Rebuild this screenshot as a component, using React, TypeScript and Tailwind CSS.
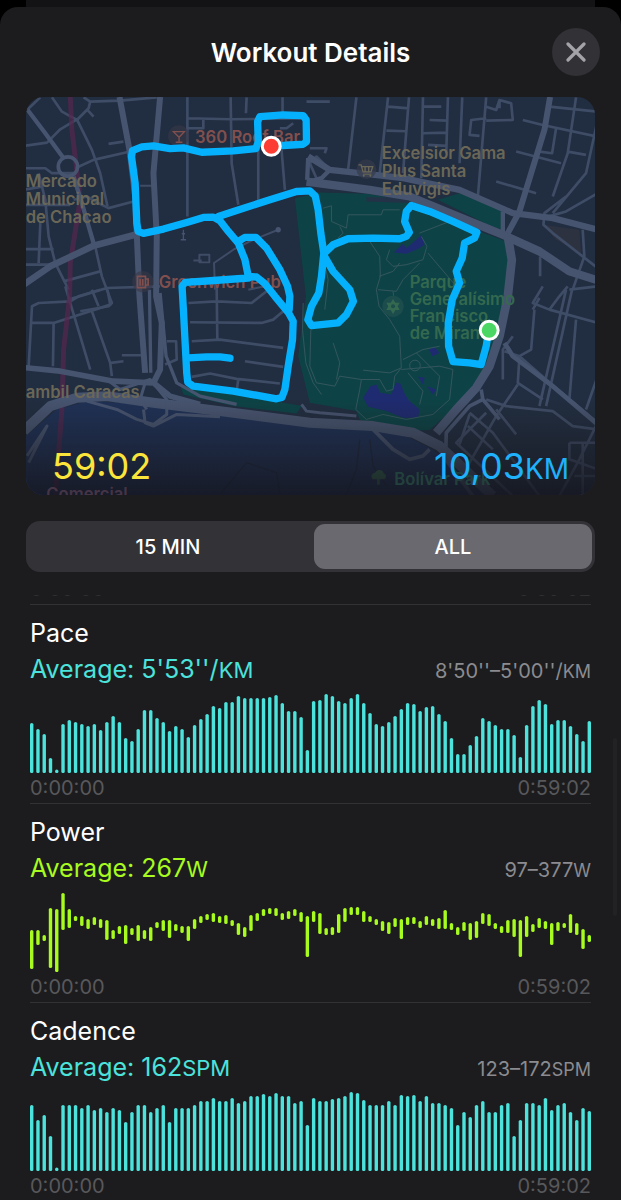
import { useState } from 'react';

type Range = [number, number];

interface Metric {
  name: string;
  average: string;
  range: string;
  unit: string;
  color: string;
  stroke: string;
  bars: Range[];
}

const fromZero = (values: number[]): Range[] => values.map((v) => [0, v]);

const PACE = fromZero([
  50, 44, 39, 15, 3, 49, 53, 51, 49, 47, 49, 43, 51, 57, 51, 35, 32, 44, 63, 63, 55, 51, 42, 47, 44, 36, 48, 54, 59, 67,
  65, 71, 71, 77, 75, 75, 75, 75, 76, 78, 70, 62, 62, 56, 23, 72, 73, 79, 77, 72, 70, 75, 79, 70, 60, 49, 47, 51, 57, 64,
  70, 69, 62, 66, 67, 59, 52, 35, 19, 19, 28, 37, 55, 52, 48, 44, 44, 38, 16, 48, 67, 73, 69, 49, 53, 53, 47, 39, 32, 52,
]);

const POWER: Range[] = [
  [3, 42], [27, 42], [31, 37], [4, 64], [0, 63], [42, 79], [44, 63], [51, 56], [46, 56], [43, 53],
  [47, 55], [44, 53], [32, 52], [33, 42], [38, 46], [28, 47], [37, 44], [31, 47], [33, 42], [31, 45],
  [44, 50], [41, 52], [34, 52], [41, 48], [39, 46], [31, 46], [43, 53], [49, 56], [52, 58], [50, 59],
  [49, 56], [48, 57], [46, 52], [37, 49], [35, 45], [41, 57], [51, 59], [56, 63], [58, 64], [56, 64],
  [52, 59], [53, 61], [56, 63], [50, 60], [15, 56], [50, 61], [38, 59], [37, 44], [37, 45], [39, 58],
  [50, 64], [57, 65], [57, 65], [50, 61], [50, 56], [47, 53], [41, 51], [38, 50], [45, 54], [33, 53],
  [47, 55], [48, 55], [44, 51], [47, 56], [46, 53], [43, 54], [43, 62], [42, 49], [37, 45], [41, 50],
  [32, 49], [34, 51], [48, 59], [46, 58], [43, 49], [39, 46], [39, 52], [35, 53], [15, 52], [35, 56],
  [40, 48], [44, 54], [43, 51], [27, 49], [41, 50], [44, 49], [39, 58], [37, 49], [23, 43], [30, 37],
];

const CADENCE = fromZero([
  66, 51, 56, 35, 3, 66, 66, 66, 63, 66, 61, 63, 59, 63, 61, 49, 59, 66, 66, 59, 63, 66, 49, 63, 63, 63, 66, 70, 70, 73,
  70, 70, 73, 68, 70, 75, 75, 77, 75, 78, 75, 75, 68, 70, 46, 73, 70, 70, 72, 73, 75, 79, 78, 71, 66, 66, 66, 70, 66, 76,
  75, 76, 70, 75, 68, 68, 66, 63, 46, 59, 54, 66, 70, 59, 59, 66, 68, 35, 51, 68, 68, 66, 73, 61, 66, 68, 59, 51, 63, 60,
]);

const METRICS: Metric[] = [
  { name: 'Pace', average: "5'53''/", range: "8'50''–5'00''/", unit: 'KM', color: 'text-[#4be3dc]', stroke: '#4be3dc', bars: PACE },
  { name: 'Power', average: '267', range: '97–377', unit: 'W', color: 'text-[#a7fb1f]', stroke: '#a7fb1f', bars: POWER },
  { name: 'Cadence', average: '162', range: '123–172', unit: 'SPM', color: 'text-[#4be3dc]', stroke: '#4be3dc', bars: CADENCE },
];

// Bars are spread over 561 units, 80 units tall
function BarChart({ bars, stroke, label }: { bars: Range[]; stroke: string; label: string }) {
  const step = 557.6 / (bars.length - 1);
  return (
    <svg viewBox="0 0 561 80" className="mt-2 block w-full" role="img" aria-label={label}>
      {bars.map(([low, high], i) => {
        const x = 1.7 + i * step;
        return (
          <line
            key={i}
            x1={x}
            x2={x}
            y1={80 - Math.max(high - 1.6, low + 1.7)}
            y2={80 - low - 1.6}
            stroke={stroke}
            strokeWidth="3.4"
            strokeLinecap="round"
          />
        );
      })}
    </svg>
  );
}

function MetricSection({ metric }: { metric: Metric }) {
  return (
    <section className="border-t border-[#323234] pt-3 pb-1 last:pb-0">
      <h2 className="text-[25px] leading-8 text-white">{metric.name}</h2>
      <div className="mt-1 flex h-8 items-baseline justify-between">
        <p className={`text-[25px] leading-8 ${metric.color}`}>
          Average: {metric.average}
          <span className="text-[22px]">{metric.unit}</span>
        </p>
        <p className="text-[20px] leading-6 text-[#8b8b90]">
          {metric.range}
          <span className="text-[18px]">{metric.unit}</span>
        </p>
      </div>
      <BarChart bars={metric.bars} stroke={metric.stroke} label={`${metric.name} over time`} />
      <div className="mt-1 flex justify-between text-[20px] leading-[22px] text-[#58585b]">
        <span>0:00:00</span>
        <span>0:59:02</span>
      </div>
    </section>
  );
}

function RouteMap() {
  return (
    <svg
      viewBox="17 21 1710 1197"
      preserveAspectRatio="xMidYMid slice"
      className="block w-full"
      role="img"
      aria-label="Route map"
      fontFamily="Inter, sans-serif"
    >
      <defs>
        <linearGradient id="fade" x1="0" y1="0" x2="0" y2="1">
          <stop offset="0" stopColor="#1c1c1e" stopOpacity="0" />
          <stop offset="1" stopColor="#15161f" stopOpacity="0.85" />
        </linearGradient>
      </defs>
      <rect x="10" y="21" width="1725" height="1200" fill="#212d40" />

      {/* Air base south of the highway */}
      <path d="M10 1045 L110 960 L200 935 L400 945 L900 1005 L1120 1020 L1240 1080 L1400 1220 L10 1220 Z" fill="#1f3156" />

      {/* Park */}
      <g fill="#0d4346">
        <path d="M825 325 L900 308 L1040 312 L1180 335 L1380 425 L1462 455 L1480 500 L1470 600 L1450 710 L1415 800 L1370 880 L1300 960 L1230 1022 L1170 1025 L1020 992 L1010 965 L870 940 L835 800 L858 620 Z" />
        <path d="M1255 330 L1320 310 L1448 362 L1448 420 L1400 402 Z" />
        <path d="M480 888 L640 912 L845 950 L830 972 L640 950 L490 915 Z" />
      </g>
      <path d="M1040 322 L1130 322 L1190 340 L1040 335 Z" fill="#243247" />
      <path d="M1570 405 L1680 420 L1685 490 L1610 450 Z" fill="#2d3240" />
      <g fill="#1f2b70">
        <path d="M1030 925 L1052 890 L1070 885 L1082 910 L1115 915 L1128 880 L1142 882 L1156 915 L1170 935 L1200 960 L1195 985 L1150 985 L1100 965 L1045 952 Z" />
        <path d="M1122 488 L1150 462 L1160 475 L1190 450 L1205 435 L1215 465 L1195 478 L1160 492 Z" />
        <path d="M1195 862 L1215 865 L1210 885 Z M1222 890 L1250 900 L1240 915 Z M1228 780 L1245 772 L1260 790 L1238 800 Z" />
      </g>

      {/* Park trails */}
      <g fill="none" stroke="#34565d" strokeWidth="3">
        <path d="M910 355 L935 348 L935 395 L980 415 L985 375 L1085 375 L1090 360 L1140 360" />
        <path d="M1050 455 L1080 500 L1082 560 L1070 600 L1078 650 L1110 690 L1140 740 L1145 835 L1110 850 L1060 845 L1030 842" />
        <path d="M1110 480 L1100 510 L1120 530 L1160 525 L1210 510 L1222 470 L1205 440 M1200 430 L1290 395 M1225 490 L1310 590" />
        <path d="M1078 560 L1120 545 L1140 520 M1075 600 L1130 605 L1150 570 L1200 520 M1130 640 L1110 680 M1120 605 L1125 640" />
        <path d="M875 650 L870 830 L890 880 L945 890 L960 860 L1025 870 L1020 900 L1008 960 L1040 990 L1090 975 L1160 990 L1240 975 L1290 930 L1300 840 L1260 830 L1145 840" />
        <path d="M940 760 L960 820 L950 870 M1025 870 L1080 870 L1100 905 L1120 900 L1125 860 L1145 835" />
        <path d="M1150 810 L1210 780 L1260 770 M1165 850 L1210 905 L1200 945 M1190 790 L1260 860 L1250 920" />
        <circle cx="1186" cy="828" r="16" />
        <path d="M850 640 L848 720 L858 820 L880 880 L905 915 M910 500 L925 570 L915 660 M960 410 L970 430 L955 445" />
      </g>

      {/* Minor streets */}
      <g fill="none" stroke="#3f4c66" strokeWidth="8" strokeLinejoin="round">
        <path d="M20 60 L60 22 M95 22 L125 65 L170 90 L205 55 L210 35 L190 22 M210 35 L300 32 L410 22 M200 58 L220 80" />
        <path d="M10 168 L80 158 L120 118 L170 88 L215 180 L240 250 L262 350" />
        <path d="M165 235 L220 210 L330 185 M10 235 L75 235 L95 250 L165 250 M265 162 L310 155" />
        <path d="M10 345 L150 345 M55 250 L75 330 L85 440 L105 520 L145 600 M10 300 L70 290 M60 400 L55 520 M10 478 L100 478 M10 525 L110 525" />
        <path d="M160 330 L200 320 L235 340 L265 355 L340 335 M225 470 L245 560 L275 640 L265 650 L180 665 M130 575 L240 545 M145 630 L260 595 L420 590" />
        <path d="M25 830 L35 650 L55 640 L150 635 L175 620 L240 600 M100 700 L98 830 M30 700 L100 700 L210 665 L270 645 L262 600" />
        <path d="M135 590 L165 690 L210 840 M215 665 L270 820 L275 860 M215 600 L235 650 M305 797 L370 797 M272 820 L310 815" />
        <path d="M502 22 L502 380 M502 85 L632 88 L860 85 M632 22 L635 220 L655 345 M680 22 L678 70 M715 100 L715 330 M550 90 L550 115 L505 115" />
        <path d="M785 180 L795 300 M788 22 L788 75 M820 100 L800 115 L780 115 M860 35 L930 35" />
        <path d="M360 288 L400 288 M520 512 L545 512 M538 495 L568 495 L568 518 L538 518 Z M585 600 L582 520 L640 480 L700 450 L775 420 M685 600 L735 590" strokeWidth="6" />
        <path d="M505 640 L590 635 L695 640 L740 605 M510 698 L725 700 L760 690 L790 665 M590 590 L592 750 M515 755 L600 750 L790 775 M675 815 L790 832 M515 862 L570 852 L650 868 L780 882 M655 870 L650 905" />
        <path d="M440 755 L468 755 L470 810 L435 825 M1010 22 L985 240 M1105 22 L1080 250 M1105 50 L1168 55 M1100 122 L1160 124 M1168 22 L1150 250" />
        <path d="M1210 22 L1205 265 M1285 22 L1280 190 M1210 50 L1265 50 M1230 90 L1282 92 M1210 130 L1280 128 M1225 165 L1282 168 M1328 22 L1320 220" />
        <path d="M1400 22 L1375 320 M1400 85 L1355 90 L1350 135 L1380 138 M1400 50 L1430 60 L1440 30 L1475 40 L1480 90 L1400 92 M1440 55 L1440 30" />
        <path d="M1510 90 L1570 105 L1735 140 M1490 185 L1625 220 M1430 275 L1550 310 M1670 22 L1645 190 L1600 320 M1610 115 L1598 190 L1560 185 M1645 185 L1700 195 M1590 50 L1735 65" />
        <path d="M1735 90 L1700 250 L1600 370 M1735 310 L1640 365 L1570 385 M1640 320 L1575 370 L1572 405 L1600 430 L1735 535 M1690 420 L1695 500 L1660 600 M1562 500 L1562 560" />
        <path d="M1570 590 L1540 640 L1590 660 L1620 620 L1645 590 M1540 660 L1560 625 M1590 660 L1735 700 M1640 600 L1560 950 M1658 600 L1580 950 M1545 660 L1535 780 L1500 800" />
        <path d="M1480 740 L1450 780 L1450 870 M1455 785 L1500 800 L1580 870 L1735 1000 M1500 800 L1495 880 L1570 930 M1670 690 L1650 930 M1735 860 L1700 960" />
        <path d="M1400 930 L1460 950 L1600 965 L1660 1010 L1735 1020 M1495 885 L1430 980 L1350 1120 L1330 1180 M1400 970 L1310 1060 L1480 1220 M1350 970 L1420 1030 L1560 1220" />
        <path d="M1320 1065 L1350 975 M1345 1010 L1420 1080 M1430 960 L1490 1035 M1735 1000 L1680 1110 L1620 1220 M1650 1060 L1735 1060 M1650 1060 L1650 1110 L1735 1140 M1665 1160 L1735 1160 M1690 1060 L1690 1220" />
        <path d="M890 265 L870 220 L890 200 L920 230 L940 245 M870 175 L920 175 L915 190 M1735 590 L1650 600" />
      </g>

      {/* Metro line */}
      <path d="M150 21 L155 120 L180 330 L150 520 L148 620 L130 780 L125 960 L105 1220" fill="none" stroke="#57264f" strokeWidth="15" opacity="0.7" />

      {/* Main roads */}
      <g fill="none" stroke="#47546f" strokeLinejoin="round">
        <path d="M22 60 L75 130 L130 205" strokeWidth="13" />
        <circle cx="143" cy="230" r="29" strokeWidth="11" />
        <path d="M160 260 L185 340 L220 460" strokeWidth="13" />
        <path d="M10 585 L90 530 L220 468 L345 435" strokeWidth="20" />
        <path d="M298 21 L328 180 L345 320 L358 620 L375 850" strokeWidth="18" />
        <path d="M420 21 L400 250 L410 440 L408 620 L425 700 L420 840 L400 880" strokeWidth="18" />
        <path d="M388 600 L392 850 M420 610 L438 800 L470 880 L540 920 L650 945" strokeWidth="10" />
        <path d="M10 834 L120 845 L280 875 L400 880 L450 920 L540 945" strokeWidth="17" />
        <path d="M10 1025 L90 950 L170 925 L260 920 L400 940 L600 965 L870 1000 L1060 1010 L1180 1030 L1260 1070 L1420 1220" strokeWidth="30" />
        <path d="M260 870 L300 900 L390 870 L440 930 L440 975 L400 1005 L350 990 L290 960 L200 935 M370 960 L375 1000 L400 1010 L470 975 L600 982 M20 1100 L80 1010 L25 1120 M375 880 L360 930 L380 960" strokeWidth="9" />
        <path d="M845 945 L860 965 L900 970 L1010 980" strokeWidth="9" />
        <path d="M860 275 L1050 300 L1170 320 L1290 370 L1450 435 L1560 485 L1650 545 L1735 572" strokeWidth="25" />
        <path d="M865 200 L930 240 L1020 250 L1150 265 L1320 300 L1480 370 L1600 385 L1735 420" strokeWidth="19" />
        <path d="M865 205 L862 270 M930 240 L905 265 L870 275 M1450 365 L1450 430" strokeWidth="13" />
        <path d="M1592 21 L1575 120 L1500 365 L1465 430" strokeWidth="18" />
        <path d="M1465 440 L1477 510 L1465 620 L1440 740 L1410 830 L1370 895 L1310 960 L1250 1030" strokeWidth="26" />
        <path d="M1455 760 L1480 800 L1600 890 L1735 1005" strokeWidth="14" />
        <path d="M1385 900 L1390 930 L1350 950 L1280 1030 L1278 1110 L1360 1220 M1390 930 L1440 990 M1060 1020 L1120 1080 L1170 1110 L1210 1100 L1230 1080" strokeWidth="11" />
      </g>
      <path d="M600 1215 L680 1120 L770 1150 L780 1215 M1020 1050 L1010 1140 L980 1215 M1050 1050 L1060 1130 L1100 1190" fill="none" stroke="#1e2940" strokeWidth="4" />

      {/* Place icons */}
      <circle cx="476" cy="138" r="32" fill="#38384a" opacity="0.6" />
      <path d="M460 125 H493 L477 142 Z M477 140 V156 M467 157 H487" fill="none" stroke="#81504e" strokeWidth="4" />
      <circle cx="368" cy="576" r="32" fill="#38384a" opacity="0.6" />
      <path d="M352 560 H376 V594 H352 Z M376 568 H384 V586 H376 M360 568 V588 M368 568 V588" fill="none" stroke="#81504e" strokeWidth="5" />
      <circle cx="1040" cy="238" r="30" fill="#343a4a" opacity="0.7" />
      <path d="M1016 225 H1024 L1030 246 H1054 L1059 230 H1026 M1036 230 V246 M1047 230 V246" fill="none" stroke="#6b6757" strokeWidth="4" />
      <path d="M1030 253 H1055" stroke="#6b6757" strokeWidth="3" />
      <circle cx="1032" cy="258" r="3" fill="#6b6757" />
      <circle cx="1052" cy="258" r="3" fill="#6b6757" />
      <circle cx="1120" cy="650" r="32" fill="#1d4c4c" />
      <path d="M1120 628 L1127 639 L1140 639 L1134 650 L1140 661 L1127 661 L1120 673 L1113 661 L1100 661 L1106 650 L1100 639 L1113 639 Z" fill="#35694f" />
      <circle cx="1120" cy="650" r="6" fill="#1d4c4c" />
      <path d="M1058 1170 a12 12 0 0 1 8 -20 a14 14 0 0 1 26 2 a10 10 0 0 1 2 18 H1080 V1186 H1072 V1170 Z" fill="#35694f" />
      <path d="M490 420 V448 M482 450 H498 M485 432 H495" stroke="#47546f" strokeWidth="4" />
      <circle cx="775" cy="420" r="8" fill="#47546f" />

      <rect x="10" y="930" width="1725" height="291" fill="url(#fade)" />

      {/* Places */}
      <g fill="#6b6757" fontSize="50" fontWeight="600">
        <text x="16" y="293">Mercado</text>
        <text x="16" y="346">Municipal</text>
        <text x="16" y="400">de Chacao</text>
        <text x="1086" y="208">Excelsior Gama</text>
        <text x="1086" y="262">Plus Santa</text>
        <text x="1086" y="316">Eduvigis</text>
        <text x="16" y="926">ambil Caracas</text>
      </g>
      <g fill="#81504e" fontSize="50" fontWeight="600">
        <text x="525" y="159">360 Roof Bar</text>
        <text x="416" y="596">Greenwich Pub</text>
        <text x="78" y="1233" fill="#453446">Comercial</text>
      </g>
      <g fill="#35694f" fontSize="50" fontWeight="600">
        <text x="1170" y="594">Parque</text>
        <text x="1170" y="646">Generalísimo</text>
        <text x="1170" y="697">Francisco</text>
        <text x="1170" y="749">de Miranda</text>
        <text x="1124" y="1187" fill="#23413c">Bolívar Park</text>
      </g>

      {/* Route */}
      <g fill="none" stroke="#05b1fc" strokeWidth="22" strokeLinecap="round" strokeLinejoin="round">
        <path d="M754 169 L850 163 L860 155 L859 90 L850 77 L790 75 L720 80 L713 95 L715 155 L708 176 L640 183 L545 187 L490 174 L450 176 L400 168 L365 171 L337 182 L334 200 L345 280 L350 400 L354 425 L370 431 L430 418 L500 398 L550 383 L580 382 L600 393 L625 425 L655 460 L675 510 L685 560 L710 562 L735 582 L765 620 L805 668 L820 695 L818 750 L805 830 L795 900 L786 924 L770 928 L640 905 L520 890 L503 878 L500 850 L490 660 L486 590 L495 578 L560 574 L685 565" />
        <path d="M595 380 L650 362 L750 330 L830 305 L870 303 L886 318 L895 360 L903 430 L912 490 L905 560 L897 610 L875 650 L864 690 L875 708 L955 700 L980 675 L1001 635 L990 600 L940 545 L914 500" />
        <path d="M655 455 L675 443 L708 443 L740 475 L780 540 L803 590 L810 620 L808 660" />
        <path d="M505 805 L560 802 L600 802 L630 806" />
        <path d="M914 490 L940 465 L985 447 L1060 445 L1140 447 L1160 440 L1169 428 L1155 395 L1160 365 L1175 347 L1230 365 L1300 395 L1372 428 L1365 445 L1335 460 L1328 505 L1310 545 L1320 580 L1298 630 L1286 700 L1287 770 L1300 816 L1350 820 L1385 825 L1400 770 L1408 720" />
      </g>
      <circle cx="754" cy="169" r="27" fill="#fc3d33" stroke="#fff" strokeWidth="9" />
      <circle cx="1409" cy="722" r="27" fill="#4bd763" stroke="#fff" strokeWidth="9" />
    </svg>
  );
}

export default function App() {
  const [span, setSpan] = useState('ALL');

  return (
    <div className="flex min-h-screen flex-col bg-black font-['Inter',sans-serif]">
      {/* Sheet underneath */}
      <div className="mx-[26px] h-[7px] bg-[#131315]" />

      <main className="relative flex-1 rounded-t-[18px] bg-[#1c1c1e] px-[26px]">
        <header className="relative flex h-[90px] items-center justify-center">
          <h1 className="text-[26px] font-semibold text-white">Workout Details</h1>
          <button
            type="button"
            aria-label="Close"
            className="absolute -right-[5px] flex size-12 items-center justify-center rounded-full bg-[#313136]"
          >
            <svg viewBox="0 0 20 20" className="size-5" stroke="#a3a3a8" strokeWidth="3.2" strokeLinecap="round">
              <path d="M2 2 L18 18 M18 2 L2 18" />
            </svg>
          </button>
        </header>

        <div className="relative overflow-hidden rounded-[18px]">
          <RouteMap />
          <div className="absolute inset-x-0 bottom-1 flex items-baseline justify-between px-[26px] text-[36px] leading-[44px]">
            <span className="text-[#fce53a]">59:02</span>
            <span className="text-[#1fb1fb]">
              10,03<span className="text-[28px]">KM</span>
            </span>
          </div>
        </div>

        <div className="mt-[26px] grid h-[51px] grid-cols-2 gap-[7px] rounded-[14px] bg-[#323237] p-[3px]">
          {['15 MIN', 'ALL'].map((option) => (
            <button
              key={option}
              type="button"
              aria-pressed={span === option}
              onClick={() => setSpan(option)}
              className={`rounded-[11px] text-[20px] font-medium text-white ${span === option ? 'bg-[#6a696f]' : ''}`}
            >
              {option}
            </button>
          ))}
        </div>

        <div className="mt-[23px] px-1">
          {/* Tail of the section scrolled out of view */}
          <div className="mb-[4px] flex h-[5px] items-end justify-between overflow-hidden text-[20px] leading-[22px] text-[#303032]">
            <span>0:00:00</span>
            <span>0:59:02</span>
          </div>
          {METRICS.map((metric) => (
            <MetricSection key={metric.name} metric={metric} />
          ))}
        </div>

        <div className="absolute top-[731px] right-1 h-[178px] w-1 rounded-full bg-[#222224]" />
      </main>
    </div>
  );
}
